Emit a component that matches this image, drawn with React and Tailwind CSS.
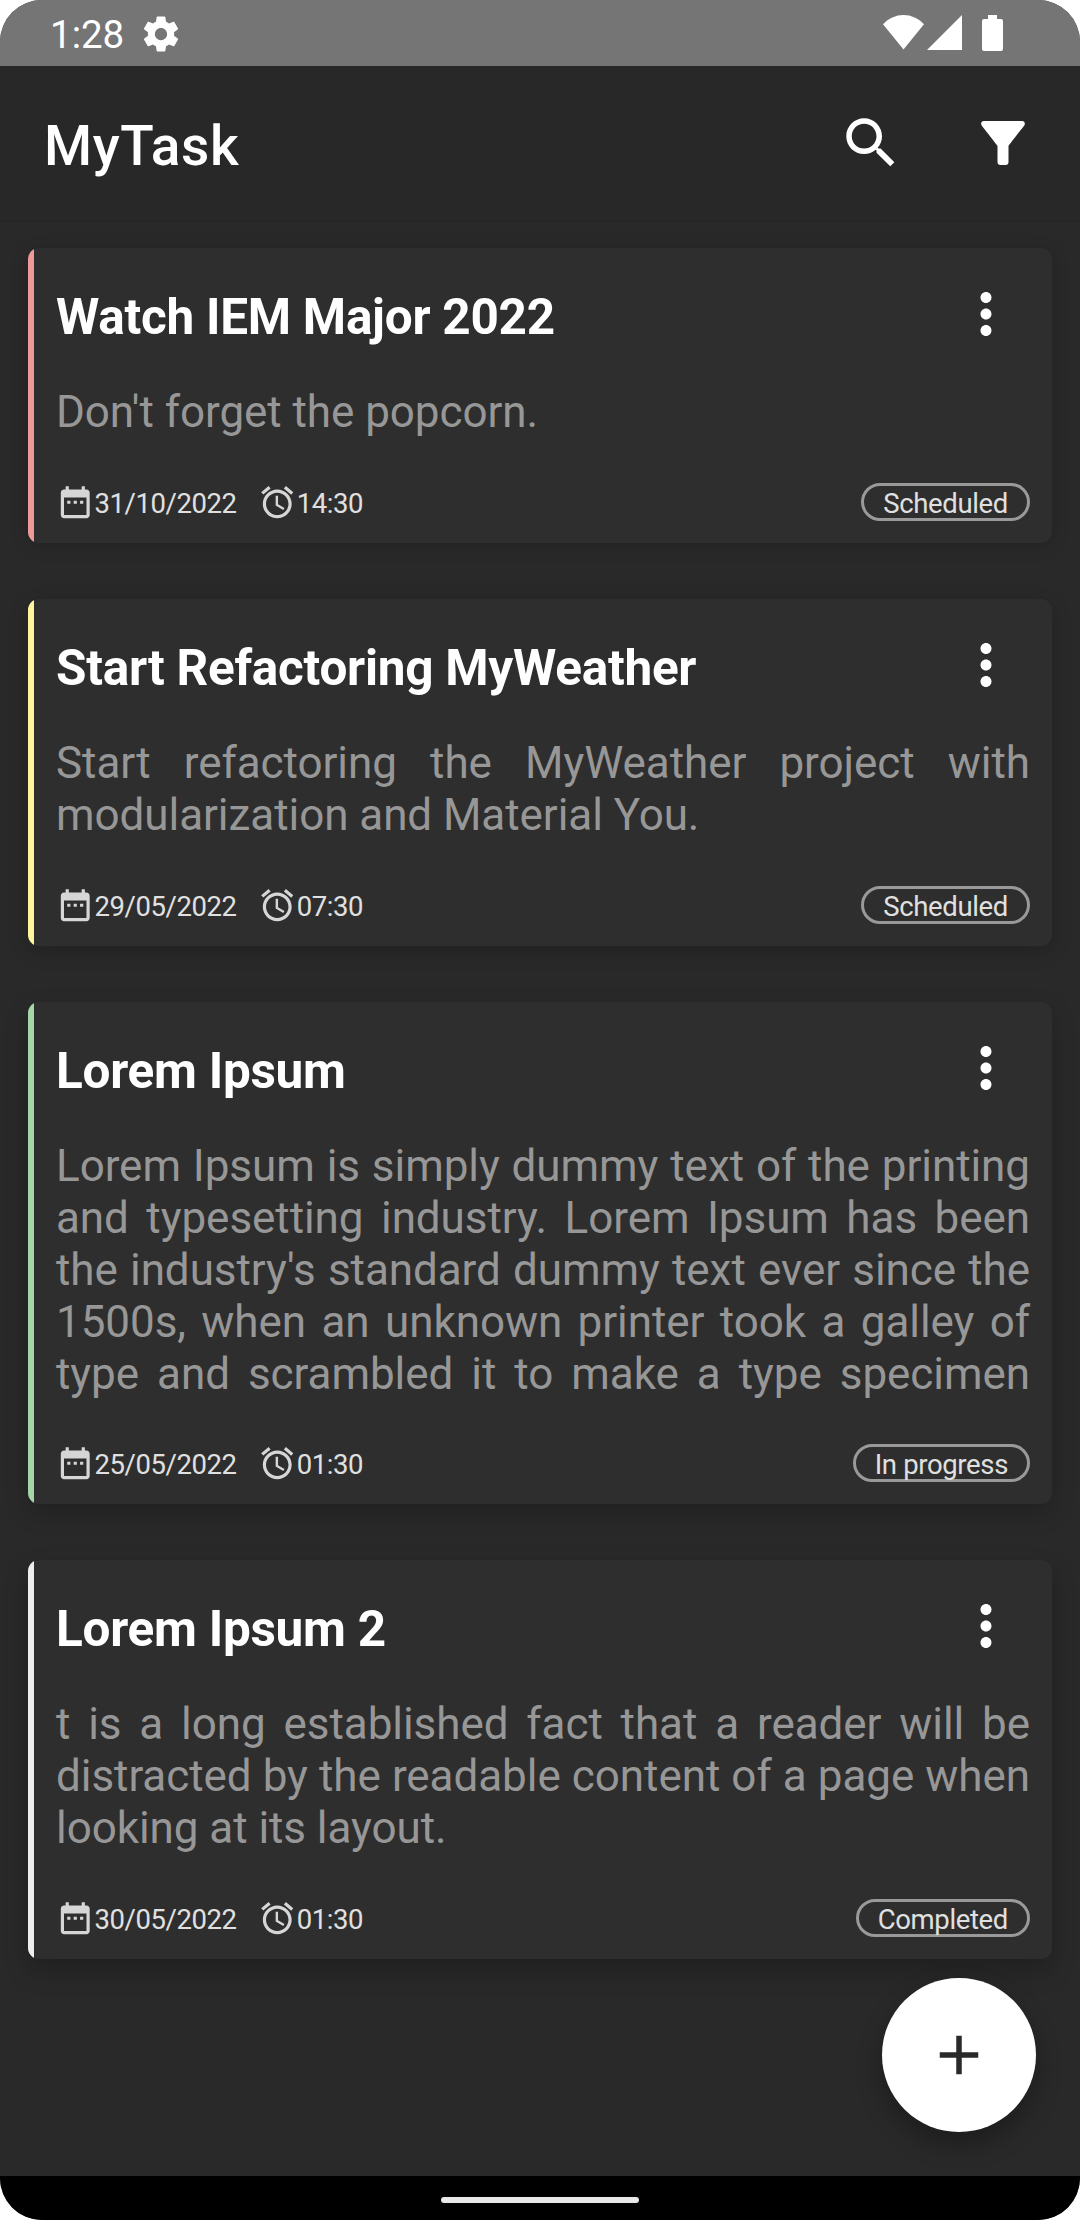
const DATE_PATH =
  "M9 11H7v2h2v-2zm4 0h-2v2h2v-2zm4 0h-2v2h2v-2zm2-7h-1V2h-2v2H8V2H6v2H5c-1.11 0-1.99.9-1.99 2L3 20c0 1.1.89 2 2 2h14c1.1 0 2-.9 2-2V6c0-1.1-.9-2-2-2zm0 16H5V9h14v11z";
const ALARM_PATH =
  "M22 5.72l-4.6-3.86-1.29 1.53 4.6 3.86L22 5.72zM7.88 3.39L6.6 1.86 2 5.71l1.29 1.53 4.59-3.85zM12.5 8H11v6l4.75 2.85.75-1.23-4-2.37V8zM12 4c-4.97 0-9 4.03-9 9s4.02 9 9 9c4.97 0 9-4.03 9-9s-4.03-9-9-9zm0 16c-3.87 0-7-3.13-7-7s3.13-7 7-7 7 3.13 7 7-3.13 7-7 7z";
const SEARCH_PATH =
  "M15.5 14h-.79l-.28-.27C15.41 12.59 16 11.11 16 9.5 16 5.91 13.09 3 9.5 3S3 5.91 3 9.5 5.91 16 9.5 16c1.61 0 3.09-.59 4.23-1.57l.27.28v.79l5 4.99L20.49 19l-4.99-5zm-6 0C7.01 14 5 11.99 5 9.5S7.01 5 9.5 5 14 7.01 14 9.5 11.99 14 9.5 14z";
const FILTER_PATH =
  "M4.25 5.61C6.27 8.2 10 13 10 13v6c0 .55.45 1 1 1h2c.55 0 1-.45 1-1v-6s3.72-4.8 5.74-7.39c.51-.66.04-1.61-.79-1.61H5.04c-.83 0-1.3.95-.79 1.61z";
const MORE_PATH =
  "M12 8c1.1 0 2-.9 2-2s-.9-2-2-2-2 .9-2 2 .9 2 2 2zm0 2c-1.1 0-2 .9-2 2s.9 2 2 2 2-.9 2-2-.9-2-2-2zm0 6c-1.1 0-2 .9-2 2s.9 2 2 2 2-.9 2-2-.9-2-2-2z";
const GEAR_PATH =
  "M19.43 12.98c.04-.32.07-.64.07-.98s-.03-.66-.07-.98l2.11-1.65c.19-.15.24-.42.12-.64l-2-3.46c-.12-.22-.39-.3-.61-.22l-2.49 1c-.52-.4-1.08-.73-1.69-.98l-.38-2.65C14.46 2.18 14.25 2 14 2h-4c-.25 0-.46.18-.49.42l-.38 2.65c-.61.25-1.17.59-1.69.98l-2.49-1c-.23-.09-.49 0-.61.22l-2 3.46c-.13.22-.07.49.12.64l2.11 1.65c-.04.32-.07.65-.07.98s.03.66.07.98l-2.11 1.65c-.19.15-.24.42-.12.64l2 3.46c.12.22.39.3.61.22l2.49-1c.52.4 1.08.73 1.69.98l.38 2.65c.03.24.24.42.49.42h4c.25 0 .46-.18.49-.42l.38-2.65c.61-.25 1.17-.59 1.69-.98l2.49 1c.23.09.49 0 .61-.22l2-3.46c.12-.22.07-.49-.12-.64l-2.11-1.65zM12 15.5c-1.93 0-3.5-1.57-3.5-3.5s1.57-3.5 3.5-3.5 3.5 1.57 3.5 3.5-1.57 3.5-3.5 3.5z";

const tasks = [
  {
    title: "Watch IEM Major 2022",
    body: "Don't forget the popcorn.",
    date: "31/10/2022",
    time: "14:30",
    status: "Scheduled",
    accent: "bg-[#ef9a9a]",
    size: "h-[295px] shadow-[0_3px_18px_rgba(0,0,0,0.16)]",
  },
  {
    title: "Start Refactoring MyWeather",
    body: "Start refactoring the MyWeather project with modularization and Material You.",
    date: "29/05/2022",
    time: "07:30",
    status: "Scheduled",
    accent: "bg-[#fff59d]",
    size: "h-[347px] shadow-[0_6px_20px_rgba(0,0,0,0.18)]",
  },
  {
    title: "Lorem Ipsum",
    body: "Lorem Ipsum is simply dummy text of the printing and typesetting industry. Lorem Ipsum has been the industry's standard dummy text ever since the 1500s, when an unknown printer took a galley of type and scrambled it to make a type specimen",
    clipped: true,
    date: "25/05/2022",
    time: "01:30",
    status: "In progress",
    accent: "bg-[#a5d6a7]",
    size: "h-[502px] shadow-[0_9px_24px_rgba(0,0,0,0.2)]",
  },
  {
    title: "Lorem Ipsum 2",
    body: "t is a long established fact that a reader will be distracted by the readable content of a page when looking at its layout.",
    date: "30/05/2022",
    time: "01:30",
    status: "Completed",
    accent: "bg-[#eeeeee]",
    size: "h-[399px] shadow-[0_12px_26px_rgba(0,0,0,0.24)]",
  },
];

function Icon({ d, className }) {
  return (
    <svg viewBox="0 0 24 24" fill="currentColor" className={"shrink-0 " + className}>
      <path d={d} />
    </svg>
  );
}

function StatusBar() {
  return (
    <div className="flex h-[66px] items-start bg-[#757575] pl-[50px] pr-[77px] text-white">
      <span className="mt-[12px] text-[38.5px] leading-[45px]">1:28</span>
      <Icon d={GEAR_PATH} className="mt-[12.5px] ml-[16px] size-[42px]" />
      <div className="mt-[15px] ml-auto flex items-start">
        <svg viewBox="0 0 41 35" className="h-[35px] w-[41px]" fill="currentColor">
          <path d="M0 9.3C5.6 3.4 12.7 0 20.5 0S35.4 3.4 41 9.3L20.5 34.5z" />
        </svg>
        <svg viewBox="0 0 35 35" className="ml-[3px] h-[35px] w-[35px]" fill="currentColor">
          <path d="M35 0V35H0z" />
        </svg>
        <svg viewBox="0 0 21 36" className="ml-[20px] h-[36px] w-[21px]" fill="currentColor">
          <path d="M6 0h9v4h4a2 2 0 0 1 2 2v28a2 2 0 0 1-2 2H2a2 2 0 0 1-2-2V6a2 2 0 0 1 2-2h4z" />
        </svg>
      </div>
    </div>
  );
}

function TaskCard({ task }) {
  return (
    <article className={"flex overflow-hidden rounded-[11px] bg-[#2e2e2e] " + task.size}>
      <div className={"w-[6px] shrink-0 " + task.accent} />
      <div className="flex min-w-0 flex-1 flex-col pt-[33px] pr-[22px] pb-[22px] pl-[22px]">
        <div className="flex h-[66px] items-center justify-between pr-[11px]">
          <h2 className="pt-[6px] text-[49.5px] leading-[58px] font-bold tracking-[-0.27px] whitespace-nowrap text-white">
            {task.title}
          </h2>
          <Icon d={MORE_PATH} className="size-[66px] text-white" />
        </div>
        <p
          className={
            "mt-[39px] text-justify text-[44px] leading-[52px] tracking-[-0.06px] text-[#979797] " +
            (task.clipped ? "[text-align-last:justify]" : "")
          }
        >
          {task.body}
        </p>
        <div className="mt-auto flex h-[38px] items-center text-[27.5px] leading-[32px] tracking-[-0.42px] text-[#e0e0e0]">
          <Icon d={DATE_PATH} className="size-[38.5px] text-[#d6d6d6]" />
          <span className="pt-[3px]">{task.date}</span>
          <Icon d={ALARM_PATH} className="ml-[21px] size-[38.5px] text-[#d6d6d6]" />
          <span className="ml-[0.5px] pt-[3px]">{task.time}</span>
          <span className="ml-auto flex h-[38px] items-center rounded-full border-[3px] border-[#999999] px-[19px] pt-[3px] tracking-[-0.35px] whitespace-nowrap">
            {task.status}
          </span>
        </div>
      </div>
    </article>
  );
}

export default function App() {
  return (
    <div className="h-[2220px] w-[1080px] bg-white font-['Roboto',sans-serif]">
      <div className="relative flex h-full flex-col overflow-hidden rounded-[42px] bg-[#292929]">
        <StatusBar />
        <header className="flex h-[154px] items-start bg-[#282828] pr-[44px] pl-[44px] text-white shadow-[0_1px_2px_rgba(0,0,0,0.12)]">
          <h1 className="mt-[48px] text-[55px] leading-[64px] font-medium tracking-[0.6px]">MyTask</h1>
          <Icon d={SEARCH_PATH} className="mt-[44px] ml-auto size-[66px]" />
          <Icon d={FILTER_PATH} className="mt-[44px] ml-[66px] size-[66px]" />
        </header>
        <main className="flex flex-1 flex-col gap-[56px] px-[28px] pt-[28px]">
          {tasks.map((task) => (
            <TaskCard key={task.title} task={task} />
          ))}
        </main>
        <button className="absolute right-[44px] bottom-[88px] flex size-[154px] items-center justify-center rounded-full bg-white text-[#292929] shadow-[0_12px_26px_rgba(0,0,0,0.3)]">
          <Icon d="M19 13h-6v6h-2v-6H5v-2h6V5h2v6h6v2z" className="size-[66px]" />
        </button>
        <footer className="flex h-[44px] justify-center bg-black pt-[21px]">
          <div className="h-[6px] w-[198px] rounded-full bg-[#e8e8e6]" />
        </footer>
      </div>
    </div>
  );
}
